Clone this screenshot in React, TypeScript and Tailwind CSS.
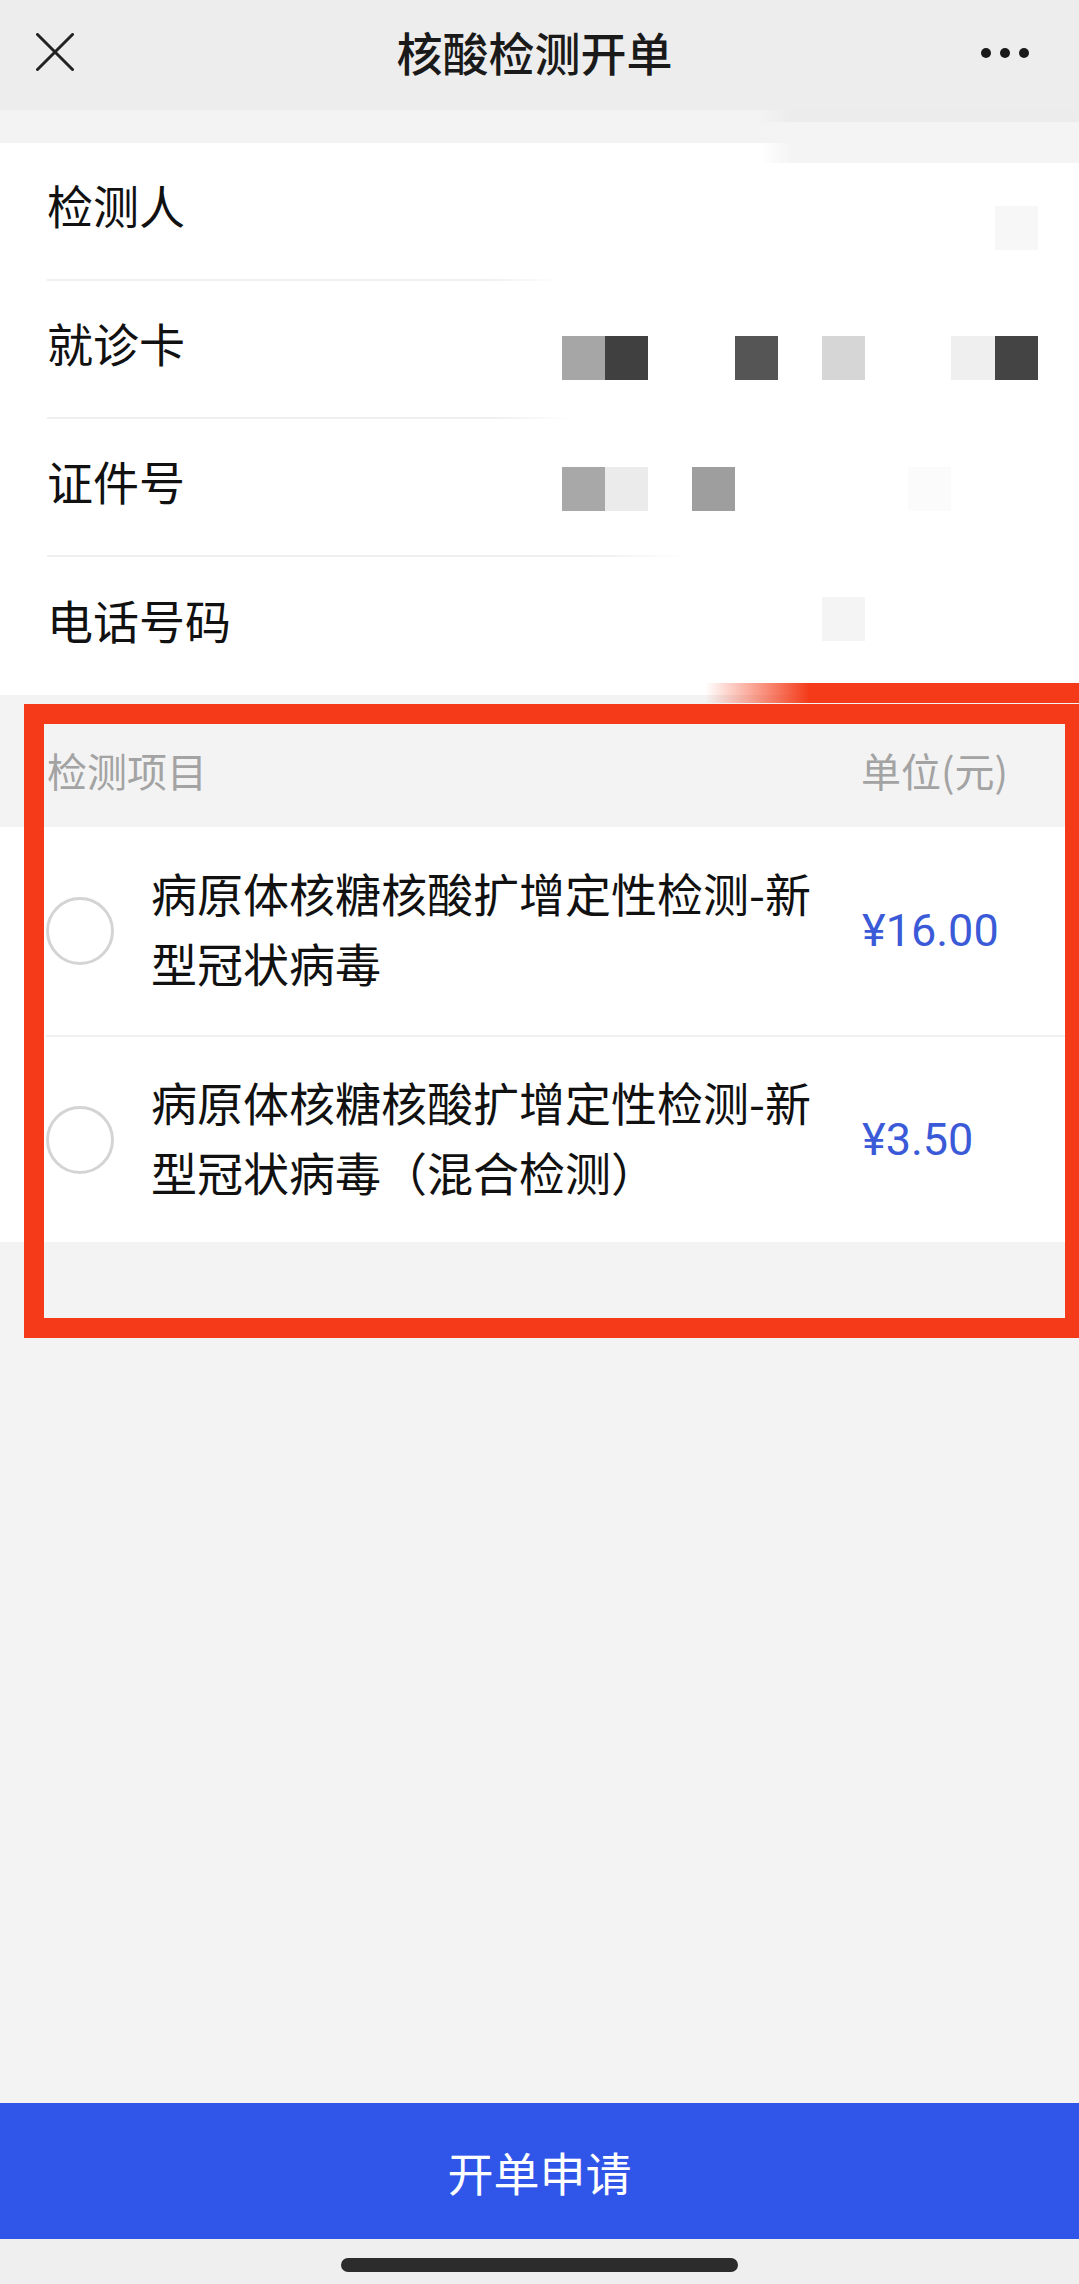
const cjk = { fontFamily: '"Noto Sans CJK SC", "Noto Sans", sans-serif' };

// mosaic colours per cell (11 cells from x=562 to 1038), "" = none
const mosaic: string[][] = [
  ["", "", "", "", "", "", "", "", "", "", "#f7f7f7"],
  ["#a6a6a6", "#404040", "", "", "#555555", "", "#d6d6d6", "", "", "#efefef", "#444444"],
  ["#a8a8a8", "#ebebeb", "", "#9e9e9e", "", "", "", "", "#fbfbfb", "", ""],
  ["", "", "", "", "", "", "#f4f4f4", "", "", "", ""],
];

const rows = [
  { label: "检测人", shift: "mt-[34px]", line: "w-[515px]" },
  { label: "就诊卡", shift: "mt-[18px]", line: "w-[525px]" },
  { label: "证件号", shift: "mt-[4px]", line: "w-[640px]" },
  { label: "电话号码", shift: "mb-[14px]", line: "" },
];

function Mosaic({ cells }: { cells: string[] }) {
  return (
    <div className="flex">
      {cells.map((c, i) => (
        <div key={i} className="w-[43.3px] h-[44px]" style={{ backgroundColor: c || "transparent" }} />
      ))}
    </div>
  );
}

function Item({ name, price }: { name: string; price: string }) {
  return (
    <div className="flex items-center pl-[46px] bg-white h-full">
      <div className="w-[68px] h-[68px] rounded-full border-[3px] border-[#d4d4d4] shrink-0" />
      <p className="ml-[37px] mb-[8px] w-[680px] text-[46px] leading-[70px] text-[#111]">{name}</p>
      <span className="ml-[31px] text-[45px] text-[#3a5ad8]" style={{ fontFamily: "Roboto, sans-serif" }}>
        {price}
      </span>
    </div>
  );
}

export default function App() {
  return (
    <div className="relative w-[1079px] h-[2284px] overflow-hidden flex flex-col bg-[#f3f3f3]" style={cjk}>
      {/* nav bar */}
      <header className="h-[110px] bg-[#ededed] flex items-center justify-between pl-[36px] pr-[50px] shrink-0">
        <svg width="38" height="38" viewBox="0 0 38 38" className="mb-[6px]">
          <path d="M1.5 1.5 36.5 36.5 M36.5 1.5 1.5 36.5" stroke="#222" strokeWidth="3" strokeLinecap="round" />
        </svg>
        <h1 className="text-[46px] font-medium text-[#1a1a1a] mb-[8px] ml-[14px]">核酸检测开单</h1>
        <div className="flex gap-[9px] mb-[4px]">
          <span className="w-[10px] h-[10px] rounded-full bg-[#1a1a1a]" />
          <span className="w-[10px] h-[10px] rounded-full bg-[#1a1a1a]" />
          <span className="w-[10px] h-[10px] rounded-full bg-[#1a1a1a]" />
        </div>
      </header>
      <div className="h-[33px] shrink-0" />

      {/* person info */}
      <section className="bg-white shrink-0">
        {rows.map((r, i) => (
          <div key={r.label}>
            <div className={`flex items-center justify-between pl-[47px] pr-[41px] ${i === 3 ? "h-[138px]" : "h-[136px]"}`}>
              <span className="text-[46px] text-[#111] mb-[14px]">{r.label}</span>
              <div className={r.shift}>
                <Mosaic cells={mosaic[i]} />
              </div>
            </div>
            {r.line && <div className={`ml-[47px] h-[2px] bg-linear-to-r from-[#efefef] from-85% to-transparent ${r.line}`} />}
          </div>
        ))}
      </section>

      {/* items */}
      <div className="h-[132px] shrink-0 flex items-center justify-between pl-[47px] pr-[71px] pt-[18px] text-[40px] text-[#a3a3a3]">
        <span>检测项目</span>
        <span>单位(元)</span>
      </div>
      <div className="h-[208px] shrink-0">
        <Item name="病原体核糖核酸扩增定性检测-新型冠状病毒" price="¥16.00" />
      </div>
      <div className="h-[2px] bg-white shrink-0">
        <div className="ml-[46px] h-full bg-[#f0f0f0]" />
      </div>
      <div className="h-[205px] shrink-0">
        <Item name="病原体核糖核酸扩增定性检测-新型冠状病毒（混合检测）" price="¥3.50" />
      </div>

      <div className="flex-1" />

      <button className="h-[136px] shrink-0 bg-[#2f56e9] text-white text-[46px]">开单申请</button>
      <div className="h-[45px] shrink-0 bg-[#efefef] flex justify-center pt-[19px]">
        <div className="w-[397px] h-[14px] rounded-full bg-[#2c2c2c]" />
      </div>

      {/* edit smudges left on the screenshot */}
      <div className="absolute top-[110px] left-[760px] right-0 flex flex-col">
        <div className="h-[12px] bg-linear-to-r from-transparent to-[#ececec] to-[10%]" />
        <div className="h-[41px] bg-linear-to-r from-transparent to-[#f4f4f4] to-[10%]" />
      </div>
      <div className="absolute top-[683px] left-[705px] right-0 h-[20px] bg-linear-to-r from-transparent to-[#f43a18] to-[28%]" />

      {/* red annotation box */}
      <div className="absolute left-[24px] top-[704px] w-[1061px] h-[634px] border-[20px] border-[#f43a18]" />
    </div>
  );
}
